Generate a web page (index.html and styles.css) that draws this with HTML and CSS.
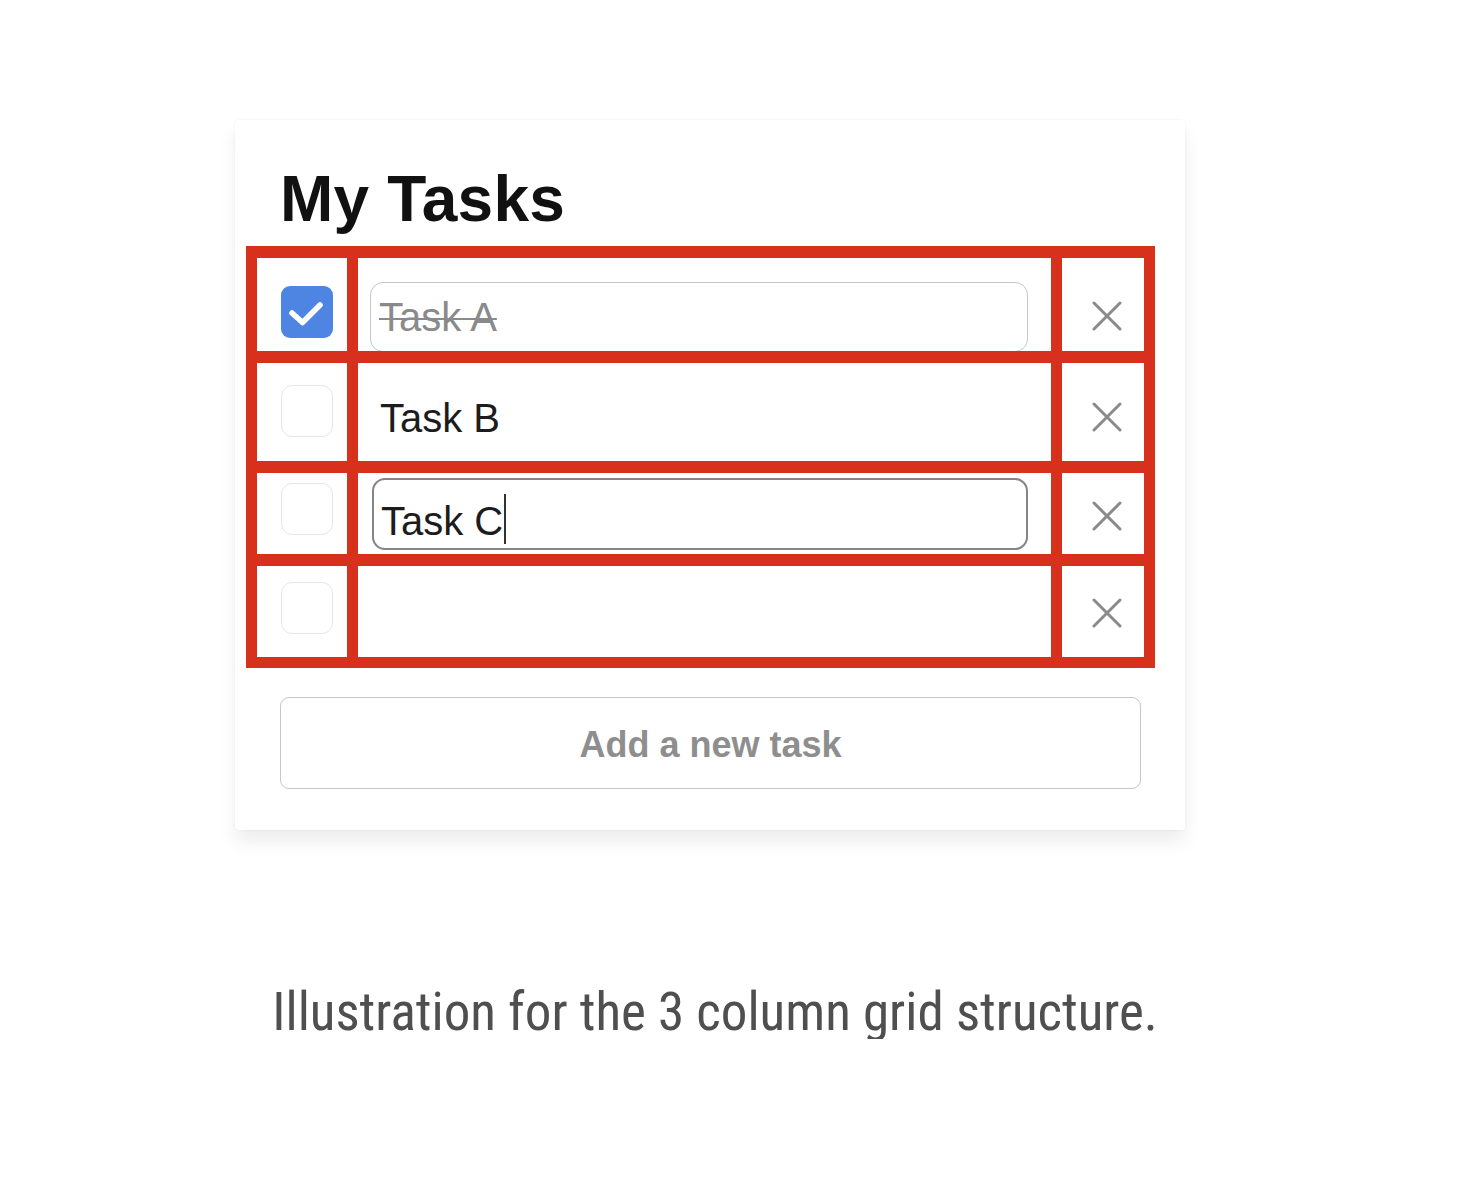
FILE: index.html
```html
<!DOCTYPE html>
<html lang="en">
<head>
<meta charset="utf-8">
<title>My Tasks</title>
<link rel="stylesheet" href="styles.css">
</head>
<body>
<div class="page">
  <div class="card">
    <h1 class="title">My Tasks</h1>
    <div class="grid">
      <div class="cell check r1"><span class="box checked"><svg viewBox="0 0 52 52" width="52" height="52"><path d="M11 27 L21.5 36.5 L39 19" fill="none" stroke="#fff" stroke-width="5.5" stroke-linecap="round" stroke-linejoin="round"/></svg></span></div>
      <div class="cell text r1"><div class="field light"><span class="done">Task A</span></div></div>
      <div class="cell del r1"><svg class="x" viewBox="0 0 30 30" width="30" height="30"><path d="M2 2 L28 28 M28 2 L2 28" stroke="#8a8a8a" stroke-width="3" stroke-linecap="round"/></svg></div>

      <div class="cell check r2"><span class="box"></span></div>
      <div class="cell text r2"><span class="plain">Task B</span></div>
      <div class="cell del r2"><svg class="x" viewBox="0 0 30 30" width="30" height="30"><path d="M2 2 L28 28 M28 2 L2 28" stroke="#8a8a8a" stroke-width="3" stroke-linecap="round"/></svg></div>

      <div class="cell check r3"><span class="box"></span></div>
      <div class="cell text r3"><div class="field focus"><span>Task C</span><span class="caret"></span></div></div>
      <div class="cell del r3"><svg class="x" viewBox="0 0 30 30" width="30" height="30"><path d="M2 2 L28 28 M28 2 L2 28" stroke="#8a8a8a" stroke-width="3" stroke-linecap="round"/></svg></div>

      <div class="cell check r4"><span class="box"></span></div>
      <div class="cell text r4"></div>
      <div class="cell del r4"><svg class="x" viewBox="0 0 30 30" width="30" height="30"><path d="M2 2 L28 28 M28 2 L2 28" stroke="#8a8a8a" stroke-width="3" stroke-linecap="round"/></svg></div>
    </div>
    <div class="add">Add a new task</div>
  </div>
  <p class="caption">Illustration for the 3 column grid structure.</p>
</div>
</body>
</html>
```

FILE: styles.css
```css
html, body {
  margin: 0;
  padding: 0;
  background: #ffffff;
}

.page {
  padding: 120px 0 0 235px;
  font-family: "Liberation Sans", Arial, sans-serif;
}

.card {
  width: 950px;
  height: 710px;
  box-sizing: border-box;
  padding: 47px 44px 41px 45px;
  background: #fff;
  border-radius: 4px;
  box-shadow: 0 12px 18px rgba(0, 0, 0, 0.07), 0 0 3px rgba(0, 0, 0, 0.06);
}

.title {
  margin: 0 0 15px 0;
  font-size: 64px;
  line-height: 64px;
  height: 64px;
  font-weight: 700;
  color: #111;
  letter-spacing: 0.2px;
}

.grid {
  width: 909px;
  box-sizing: border-box;
  margin-left: -34px;
  display: grid;
  grid-template-columns: 90px 693px 82px;
  grid-template-rows: 93px 98px 81px 91px;
  column-gap: 11px;
  row-gap: 12px;
  padding: 12px 11px 11px 11px;
  background: #d7301d;
}

.cell {
  background: #fff;
  overflow: hidden;
  box-sizing: border-box;
}

.check { padding-left: 24px; }
.del { padding-left: 30px; }

.box {
  display: block;
  width: 52px;
  height: 52px;
  box-sizing: border-box;
  border: 1.5px solid #e6e6e6;
  border-radius: 11px;
  background: #fff;
}

.box.checked {
  border: none;
  background: #4e85e2;
  border-radius: 9px;
}

.box svg { display: block; }
.x { display: block; }

.field {
  box-sizing: border-box;
  border-radius: 13px;
  padding-left: 8px;
  font-size: 40px;
  line-height: 40px;
  color: #1c1c1c;
  white-space: nowrap;
}

.field.light {
  margin-left: 12px;
  width: 658px;
  height: 70px;
  border: 1.5px solid #c6c6c6;
  padding-top: 14px;
}

.field.focus {
  margin-left: 14px;
  width: 656px;
  height: 72px;
  border: 2px solid #858585;
  padding-top: 14px;
  padding-left: 7px;
}

.done {
  color: #8a8a8a;
  text-decoration: line-through;
  text-decoration-thickness: 2px;
}

.plain {
  display: block;
  padding-left: 22px;
  font-size: 40px;
  line-height: 40px;
  color: #1c1c1c;
}

.caret {
  display: inline-block;
  width: 2px;
  height: 50px;
  margin-left: 1px;
  background: #333;
  vertical-align: -9px;
}

.r1.check { padding-top: 28px; }
.r1.del { padding-top: 43px; }
.r1.text { padding-top: 24px; }

.r2.check { padding-top: 22px; }
.r2.del { padding-top: 39px; }
.r2.text { padding-top: 35px; }

.r3.check { padding-top: 10px; }
.r3.del { padding-top: 28px; }
.r3.text { padding-top: 5px; }

.r4.check { padding-top: 16px; }
.r4.del { padding-top: 32px; }

.add {
  margin-top: 29px;
  height: 92px;
  box-sizing: border-box;
  border: 1.5px solid #c6c6c6;
  border-radius: 9px;
  display: flex;
  align-items: center;
  justify-content: center;
  font-size: 36px;
  font-weight: 700;
  color: #8e8e8e;
  padding-top: 3px;
}

.caption {
  margin: 156px 0 0 0;
  width: 960px;
  text-align: center;
  font-family: "Liberation Sans Narrow", "Roboto Condensed", "Liberation Sans", sans-serif;
  font-size: 53px;
  line-height: 53px;
  color: #4f4f4f;
}
```
